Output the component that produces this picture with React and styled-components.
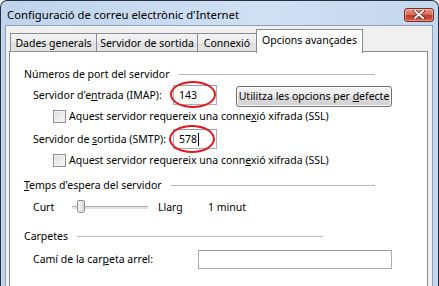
import styled, { createGlobalStyle } from 'styled-components'

const colors = {
  frameDark: '#26323f',
  client: '#f0f0f0',
  border: '#898c95',
  groupLine: '#b9b9b9',
  inputBorder: '#abadb3',
  text: '#000000',
  ring: '#e3171e'
}

const GlobalStyle = createGlobalStyle`
  html, body {
    margin: 0;
    padding: 0;
    background: #ffffff;
  }
  body {
    font-family: 'Noto Sans', 'Open Sans', sans-serif;
    font-size: 10.5px;
    color: ${colors.text};
  }
`

const Window = styled.div`
  width: 437px;
  height: 285px;
  border: 1px solid ${colors.frameDark};
  border-bottom: none;
  border-radius: 7px 7px 0 0;
  background: linear-gradient(90deg, #bfd4ec 0%, #cfe0f3 60%, #c3d7ee 100%);
  display: flex;
  flex-direction: column;
  overflow: hidden;
`

const TitleBar = styled.div`
  height: 24px;
  display: flex;
  align-items: center;
  justify-content: space-between;
  padding: 0 4px 0 6px;
  flex: none;
`

const Title = styled.span`
  font-size: 11.3px;
  color: #000;
  margin-top: 3px;
`

const CloseButton = styled.div`
  width: 30px;
  height: 14px;
  box-sizing: border-box;
  margin-top: 3px;
  border: 1px solid #7a2a22;
  border-radius: 3px;
  background: linear-gradient(#e59a88 0%, #d8705c 45%, #c0392b 55%, #d4604a 100%);
  display: flex;
  align-items: center;
  justify-content: center;
  box-shadow: inset 0 0 0 1px rgba(255, 255, 255, 0.35);
`

const Client = styled.div`
  flex: 1;
  margin: 0 5px 0 4px;
  border: 1px solid #8ea2bb;
  border-bottom: none;
  background: ${colors.client};
  padding: 2px 4px 0 3px;
  display: flex;
  flex-direction: column;
`

const TabStrip = styled.div`
  display: flex;
  align-items: flex-end;
  height: 24px;
  padding-left: 1px;
  position: relative;
  z-index: 1;
`

const Tab = styled.div`
  width: ${p => p.$w}px;
  height: ${p => (p.$active ? 24 : 19)}px;
  box-sizing: border-box;
  border: 1px solid ${colors.border};
  border-bottom: ${p => (p.$active ? 'none' : `1px solid ${colors.border}`)};
  margin-left: ${p => (p.$first ? 0 : -1)}px;
  background: ${p => (p.$active ? '#ffffff' : 'linear-gradient(#f3f3f3 0%, #ebebeb 50%, #dedede 51%, #e6e6e6 100%)')};
  display: flex;
  align-items: center;
  justify-content: center;
  padding-bottom: ${p => (p.$active ? 4 : 0)}px;
  white-space: nowrap;
  margin-bottom: ${p => (p.$active ? -1 : 0)}px;
`

const Panel = styled.div`
  flex: 1;
  margin-top: -1px;
  border: 1px solid ${colors.border};
  border-bottom: none;
  background: #ffffff;
  padding-left: 14px;
  display: flex;
  flex-direction: column;
`

const GroupHeader = styled.div`
  display: flex;
  align-items: center;
  height: 16px;
  width: ${p => p.$w}px;
  margin-top: ${p => p.$mt}px;
  white-space: nowrap;

  &::after {
    content: '';
    flex: 1;
    height: 1px;
    margin-left: 9px;
    margin-top: 1px;
    background: ${colors.groupLine};
  }
`

const Row = styled.div`
  display: flex;
  align-items: center;
  height: ${p => p.$h || 20}px;
  margin-top: ${p => p.$mt || 0}px;
  padding-left: ${p => p.$indent || 9}px;
  white-space: nowrap;
`

const FieldLabel = styled.span`
  width: ${p => p.$w}px;
  flex: none;
`

const Acc = styled.span`
  text-decoration: underline;
  text-underline-offset: 1px;
`

const InputWrap = styled.div`
  position: relative;
  flex: none;
`

const Input = styled.div`
  width: ${p => p.$w}px;
  height: ${p => p.$h || 20}px;
  box-sizing: border-box;
  border: 1px solid ${colors.inputBorder};
  border-top-color: #9a9da5;
  background: #ffffff;
  display: flex;
  align-items: center;
  padding-left: 5px;
`

const Caret = styled.span`
  display: inline-block;
  width: 1px;
  height: 13px;
  background: #000;
  margin-left: 1px;
`

const Ring = styled.div`
  position: absolute;
  left: ${p => p.$x}px;
  top: ${p => p.$y}px;
  width: ${p => p.$w}px;
  height: ${p => p.$h}px;
  border: 2px solid ${colors.ring};
  border-radius: 50%;
  box-sizing: border-box;
  pointer-events: none;
`

const Button = styled.div`
  margin-left: 19px;
  width: 156px;
  height: 21px;
  margin-top: 2px;
  box-sizing: border-box;
  border: 1px solid #707070;
  border-radius: 3px;
  background: linear-gradient(#f2f2f2 0%, #ebebeb 50%, #dddddd 51%, #cfcfcf 100%);
  box-shadow: inset 0 0 0 1px #fcfcfc;
  display: flex;
  align-items: center;
  justify-content: center;
`

const CheckBox = styled.span`
  width: 13px;
  height: 13px;
  box-sizing: border-box;
  border: 1px solid #8f8f8f;
  background: linear-gradient(135deg, #dcdcdc 0%, #f0f0f0 70%, #fbfbfb 100%);
  box-shadow: inset 0 0 0 1px #f4f4f4;
  margin-right: 3px;
  flex: none;
`

const SliderTrack = styled.div`
  position: relative;
  width: 76px;
  height: 20px;
  flex: none;
  margin-right: 10px;

  &::before {
    content: '';
    position: absolute;
    left: 0;
    right: 0;
    top: 9px;
    height: 2px;
    background: #e3e3e3;
    border-top: 1px solid #b0b0b0;
    border-bottom: 1px solid #fff;
  }
`

const Thumb = styled.div`
  position: absolute;
  left: 5px;
  top: 3px;
  width: 8px;
  height: 13px;
  box-sizing: border-box;
  border: 1px solid #8c8c8c;
  border-radius: 2px 2px 3px 3px;
  background: linear-gradient(90deg, #f4f4f4, #dadada);
`

export default function App() {
  return (
    <>
      <GlobalStyle />
      <Window>
        <TitleBar>
          <Title>Configuració de correu electrònic d'Internet</Title>
          <CloseButton>
            <svg width="12" height="9" viewBox="0 0 12 9">
              <path d="M2 1 L10 8 M10 1 L2 8" stroke="#5a1a14" strokeWidth="3.4" strokeLinecap="round" />
              <path d="M2 1 L10 8 M10 1 L2 8" stroke="#ffffff" strokeWidth="2" strokeLinecap="round" />
            </svg>
          </CloseButton>
        </TitleBar>
        <Client>
          <TabStrip>
            <Tab $w={87} $first>Dades generals</Tab>
            <Tab $w={102}>Servidor de sortida</Tab>
            <Tab $w={60}>Connexió</Tab>
            <Tab $w={107} $active>Opcions avançades</Tab>
          </TabStrip>
          <Panel>
            <GroupHeader $w={351} $mt={14}>Números de port del servidor</GroupHeader>
            <Row $h={22} $mt={2}>
              <FieldLabel $w={140}>Servidor d'e<Acc>n</Acc>trada (IMAP):</FieldLabel>
              <InputWrap>
                <Input $w={44}>143</Input>
                <Ring $x={-3} $y={-4} $w={46} $h={27} />
              </InputWrap>
              <Button><span>Utilitza les opcions per <Acc>d</Acc>efecte</span></Button>
            </Row>
            <Row $h={16} $mt={2} $indent={29}>
              <CheckBox />
              <span>Aquest servidor requereix una conne<Acc>x</Acc>ió xifrada (SSL)</span>
            </Row>
            <Row $mt={5}>
              <FieldLabel $w={140}>Servidor de <Acc>s</Acc>ortida (SMTP):</FieldLabel>
              <InputWrap>
                <Input $w={44}>578<Caret /></Input>
                <Ring $x={-4} $y={-4} $w={46} $h={28} />
              </InputWrap>
            </Row>
            <Row $h={16} $mt={3} $indent={29}>
              <CheckBox />
              <span>Aquest servidor requereix una conn<Acc>e</Acc>xió xifrada (SSL)</span>
            </Row>
            <GroupHeader $w={351} $mt={9}><span><Acc>T</Acc>emps d'espera del servidor</span></GroupHeader>
            <Row $mt={4}>
              <FieldLabel $w={39}>Curt</FieldLabel>
              <SliderTrack>
                <Thumb />
              </SliderTrack>
              <FieldLabel $w={50}>Llarg</FieldLabel>
              <span>1 minut</span>
            </Row>
            <GroupHeader $w={299} $mt={11}>Carpetes</GroupHeader>
            <Row $mt={5}>
              <FieldLabel $w={165}>Camí de la car<Acc>p</Acc>eta arrel:</FieldLabel>
              <Input $w={194} $h={19} />
            </Row>
          </Panel>
        </Client>
      </Window>
    </>
  )
}
